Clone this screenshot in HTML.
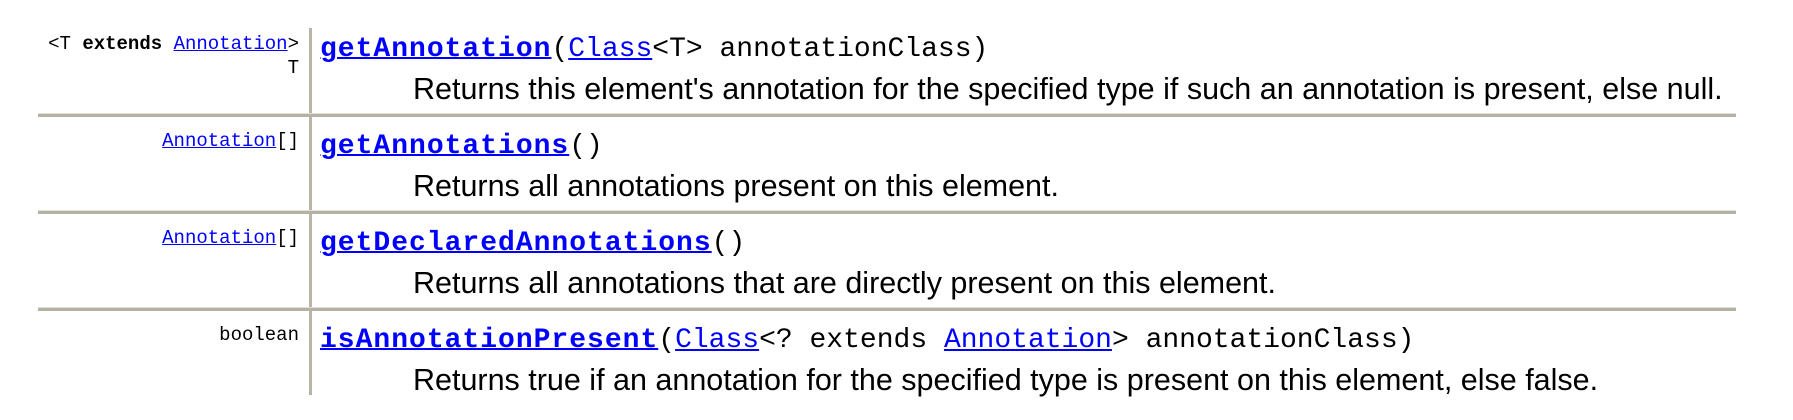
<!DOCTYPE html>
<html><head><style>
html,body{margin:0;padding:0;background:#fff;width:1793px;height:420px;overflow:hidden;position:relative}
.h{position:absolute;left:38px;width:1698px;height:3px;background:#b5b1a4;border-top:1px solid #e2dfd6}
.v{position:absolute;left:309px;width:3px;background:#b8b4a8}
.t{position:absolute;white-space:pre;line-height:1}
.s{font-family:"Liberation Mono",monospace;font-size:19px;color:#000;right:1494px;text-align:right}
.m{font-family:"Liberation Mono",monospace;font-size:28px;color:#000;left:320px}
.m b{letter-spacing:1.0px;color:#0000ff;text-decoration:underline;text-decoration-thickness:2px}
a{color:#0000ff;text-decoration:underline}
.d{font-family:"Liberation Sans",sans-serif;font-size:30.5px;color:#000;left:413px}
</style></head><body>
<div class="v" style="top:28px;height:367px"></div>
<div class="h" style="top:113px"></div>
<div class="h" style="top:210px"></div>
<div class="h" style="top:307px"></div>

<div class="t s" style="top:35px">&lt;T <b>extends</b> <a>Annotation</a>&gt;</div>
<div class="t s" style="top:59px">T</div>
<div class="t m" style="top:36px"><b>getAnnotation</b>(<a>Class</a>&lt;T&gt; annotationClass)</div>
<div class="t d" style="top:74px">Returns this element's annotation for the specified type if such an annotation is present, else null.</div>

<div class="t s" style="top:132px"><a>Annotation</a>[]</div>
<div class="t m" style="top:133px"><b>getAnnotations</b>()</div>
<div class="t d" style="top:171px">Returns all annotations present on this element.</div>

<div class="t s" style="top:229px"><a>Annotation</a>[]</div>
<div class="t m" style="top:230px"><b>getDeclaredAnnotations</b>()</div>
<div class="t d" style="top:268px">Returns all annotations that are directly present on this element.</div>

<div class="t s" style="top:326px">boolean</div>
<div class="t m" style="top:327px"><b>isAnnotationPresent</b>(<a>Class</a>&lt;? extends <a>Annotation</a>&gt; annotationClass)</div>
<div class="t d" style="top:365px">Returns true if an annotation for the specified type is present on this element, else false.</div>
</body></html>
